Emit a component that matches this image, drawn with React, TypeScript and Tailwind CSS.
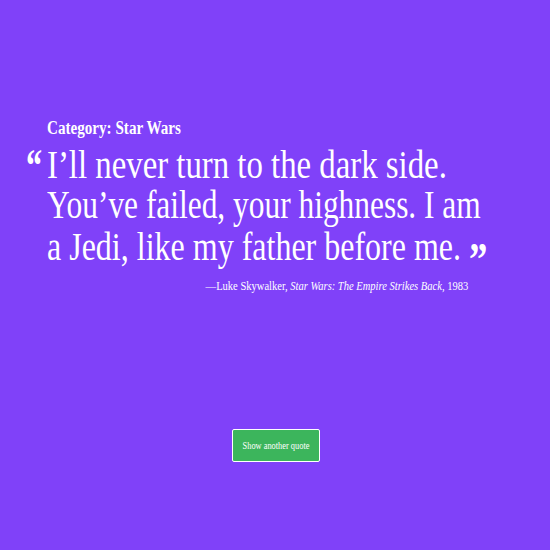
import React from "react";

const serif = { fontFamily: '"Liberation Serif", "Times New Roman", serif' };

export default function App() {
  return (
    <div
      className="w-[550px] h-[550px] overflow-hidden bg-[#8041f9] text-white flex flex-col"
      style={serif}
    >
      <div className="pt-[116px] pl-[47px]">
        <div className="h-[24px] leading-[24px] text-[18px] font-bold whitespace-nowrap">
          <span className="inline-block scale-x-[0.84] origin-left">Category: Star Wars</span>
        </div>
      </div>
      <div className="flex mt-[5px] pl-[26px]">
        <div className="w-[21px] h-[40px] leading-[40px] text-[46px] font-bold">
          <span className="inline-block scale-x-[0.7] origin-left relative top-[1px]">“</span>
        </div>
        <div className="text-[40px] leading-[40px] whitespace-nowrap overflow-visible">
          <div className="h-[40px] w-[420px]">
            <span className="inline-block scale-x-[0.82] origin-left">I’ll never turn to the dark side.</span>
          </div>
          <div className="h-[40px] w-[420px]">
            <span className="inline-block scale-x-[0.785] origin-left">You’ve failed, your highness. I am</span>
          </div>
          <div className="h-[40px] w-[420px]">
            <span className="inline-block scale-x-[0.8] origin-left">
              a Jedi, like my father before me.{" "}
              <span className="font-bold text-[46px] relative top-[15px]">”</span>
            </span>
          </div>
        </div>
      </div>
      <div className="mt-[11px] flex justify-end pr-[82px] h-[20px] leading-[20px] text-[13px] whitespace-nowrap">
        <span className="inline-block scale-x-[0.81] origin-right">
          —Luke Skywalker, <i>Star Wars: The Empire Strikes Back</i>, 1983
        </span>
      </div>
      <div className="mt-[133px] flex justify-center pl-[2px]">
        <button className="w-[88px] h-[33px] bg-[#3cb55c] border border-white rounded-[2px] text-white text-[11px] flex items-center justify-center whitespace-nowrap">
          <span className="inline-block scale-x-[0.76]">Show another quote</span>
        </button>
      </div>
    </div>
  );
}
